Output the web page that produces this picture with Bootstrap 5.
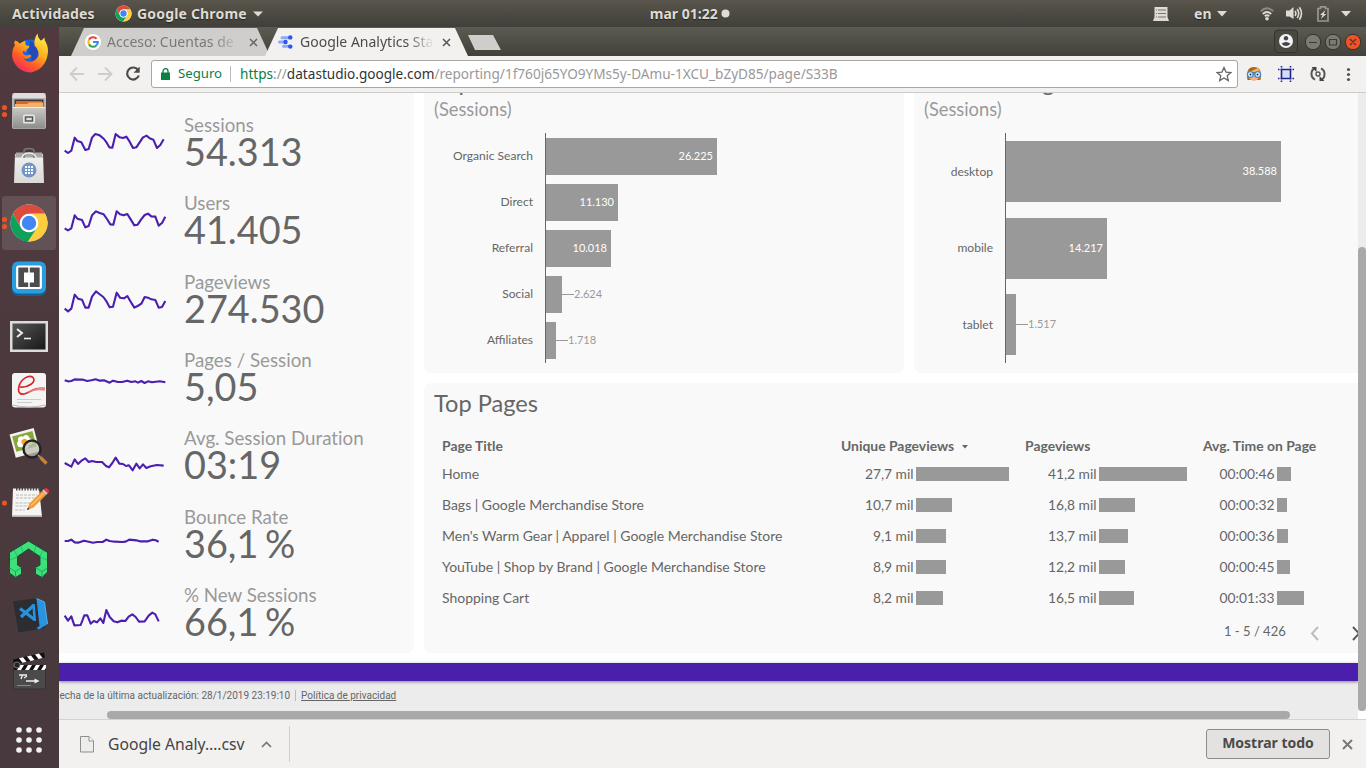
<!DOCTYPE html>
<html lang="es">
<head>
<meta charset="utf-8">
<meta name="viewport" content="width=device-width, initial-scale=1">
<title>Google Analytics Standard Dashboard</title>
<link href="https://cdn.jsdelivr.net/npm/bootstrap@5.3.0/dist/css/bootstrap.min.css" rel="stylesheet">
<style>
body{height:768px;width:1366px;font-family:"Noto Sans","Open Sans",sans-serif;background:#fff}
svg{display:block;flex:none}
.topbar{height:27px;background:linear-gradient(#59554c,#403f39);color:#dfdbd2;font-size:14px;font-weight:700;text-shadow:0 1px 1px #222;letter-spacing:.18px}
.dock{width:59px;background:linear-gradient(#50393f,#47393d)}
.dock-item{height:56px}
.tabstrip{height:29px;background:linear-gradient(#5c5b51,#41413a);font-size:14px;line-height:28px}
.tab{height:28px;margin-top:1px;background:#d0cecc;color:#7b7977;clip-path:polygon(13px 0,calc(100% - 13px) 0,100% 100%,0 100%)}
.tab-on{background:#f2f1f0;color:#4e4c4b}
.tab-name{overflow:hidden;white-space:nowrap;-webkit-mask-image:linear-gradient(90deg,#000 80%,transparent)}
.tab1{width:199px;margin-left:12px;padding-left:14px}
.tab2{width:203px;margin-left:-5px;padding-left:13px}
.newtab{width:33px;height:15px;margin:8px 0 0 0;background:#d0cecc;clip-path:polygon(0 0,25px 0,100% 100%,7px 100%)}
.toolbar{height:37px;background:#f2f1f0;border-bottom:1px solid #cdccca}
.addr{width:1087px;height:28px;border:1px solid #a9a7a5;border-radius:3px;background:#fff;font-size:13.6px;color:#999;white-space:nowrap}
.ok{color:#0b8043}
.host{color:#333}
.view{height:626px;background:#fff;overflow:hidden}
.page{width:1299px;font-family:Lato,sans-serif;color:#666;overflow:hidden}
.panel{background:#f9f9f9;flex:none}
.kpis{width:355px;height:560px;padding-top:22px;border-radius:0 0 7px 0}
.kpi{height:78.33px}
.kpi-name{font-size:18.74px;line-height:18px;padding-top:1px;color:#999;font-variant-ligatures:none}
.kpi-num{font-size:37.8px;line-height:36px;word-spacing:-3px}
.spark{fill:none;stroke:#4a1fb0;stroke-width:6.3;stroke-linejoin:round}
.chart-box{height:280px;overflow:hidden;padding-left:10px}
.box-title{font-size:23.6px;line-height:28px;white-space:nowrap}
.chart-box .box-title{margin-top:-25px}
.box-sub{font-size:18.3px;line-height:22px;color:#999;margin-top:2px}
.rows{height:230px;margin-top:13px}
.bar-row{flex:1 1 0}
.cat{font-size:12.05px;padding:.4px 12px 0 0;text-align:right}
.plot{border-left:1px solid #666}
.bar{background:#999;color:#fff;font-size:11px;padding-right:4px}
.leader{width:12px;height:1px;background:#999}
.outval{color:#999;font-size:11px}
.channels{width:480px;border-radius:0 0 7px 7px}.channels .cat{width:111px}.channels .bar{height:37px}
.devices{width:444px;border-radius:0 0 0 7px}.devices .cat{width:81px}.devices .bar{height:61px}.devices .box-title{letter-spacing:.2px}
.pages{height:270px;padding:6px 0 0 10px;border-radius:7px 0 0 7px;overflow:hidden}
.grid-table{table-layout:fixed;width:916px;margin:16px 0 0 8px;font-size:13.98px;line-height:20px}
.grid-table th,.grid-table td{padding:0;height:31px;color:#666;white-space:nowrap}
.grid-table th{height:25px;font-size:13.9px}
.numval{width:73px;text-align:right;font-size:13.8px;padding-right:.5px}
.numval-b{width:72px}
.hbar{height:14px;background:#999;margin-left:2px}
.pager{font-size:13px;line-height:20px;padding-left:790px;margin-top:8px;white-space:nowrap}
.stripe{height:18px;background:#4a1fac;box-shadow:0 1px 3px rgba(0,0,0,.45);position:relative}
.foot{height:30px;background:#ececec;font:10px/29px Roboto,sans-serif;color:#666;overflow:hidden;white-space:nowrap}
.foot>span:first-child{margin-left:-5px}
.htrack{height:8px;background:#ececec}
.hthumb{width:1183px;margin-left:48px;background:#a9a9a9;border-radius:4px}
.vtrack{width:8px;height:618px;background:#ececec;padding-top:154px}
.vthumb{height:464px;background:#a9a9a9;border-radius:4px}
.shelf{height:49px;background:#f2f1f0;border-top:1px solid #d3d2d0;color:#444}
.fname{font-size:15.7px;width:138px;white-space:nowrap;padding-top:2px}
.showall{width:124px;height:30px;border:1px solid #8c8b8a;border-radius:3px;background:#e3e2e0;color:#4b4a49;font-size:14px;font-weight:700;padding:0 0 3px;line-height:22px}
</style>
<script src="https://cdn.jsdelivr.net/npm/bootstrap@5.3.0/dist/js/bootstrap.bundle.min.js"></script>
</head>
<body class="d-flex flex-column overflow-hidden">
<svg width="0" height="0" class="position-absolute">
 <defs>
  <linearGradient id="ffBody" x1=".8" y1="0" x2=".2" y2="1"><stop offset="0" stop-color="#fff04a"/><stop offset=".4" stop-color="#ffb01f"/><stop offset=".7" stop-color="#ff5a26"/><stop offset="1" stop-color="#f0246e"/></linearGradient>
  <linearGradient id="drawer" x1="0" y1="0" x2="0" y2="1"><stop offset="0" stop-color="#c9c9c7"/><stop offset="1" stop-color="#8d8d8b"/></linearGradient>
  <linearGradient id="sheet" x1="0" y1="0" x2="0" y2="1"><stop offset="0" stop-color="#f2f2f0"/><stop offset="1" stop-color="#d9d9d6"/></linearGradient>
  <linearGradient id="term" x1="0" y1="0" x2="1" y2="1"><stop offset="0" stop-color="#555"/><stop offset="1" stop-color="#181818"/></linearGradient>
  <symbol id="chrome" viewBox="-20 -20 40 40"><circle r="19" fill="#fff"/><path d="M-16.45-9.5A19 19 0 0 1 16.45-9.5L0-9.5A9.5 9.5 0 0 0-8.2 4.75Z" fill="#dd4b3e"/><path d="M16.45-9.5A19 19 0 0 1-1 19L8.2 4.75A9.5 9.5 0 0 0 0-9.5Z" fill="#ffcd40"/><path d="M-1 19A19 19 0 0 1-16.45-9.5L-8.2 4.75A9.5 9.5 0 0 0 8.2 4.75Z" fill="#10a05c"/><circle r="9.2" fill="#fff"/><circle r="7.4" fill="#4285f4"/></symbol>
 </defs>
</svg>

<header class="topbar d-flex align-items-center position-relative">
 <span style="padding-left:12px;width:115px">Actividades</span>
 <svg width="17" height="17"><use href="#chrome" width="17" height="17"/></svg>
 <span style="padding-left:5px">Google Chrome</span>
 <svg style="margin-left:6px" width="10" height="6"><path d="M0 .5h10l-5 5z" fill="#dfdbd2"/></svg>
 <span style="margin-left:387px;letter-spacing:0">mar 01:22</span>
 <svg style="margin-left:3px" width="9" height="9"><circle cx="4.5" cy="4.5" r="4" fill="#dfdbd2"/></svg>
 <div class="ms-auto d-flex align-items-center">
  <svg width="16" height="14"><path d="M1.500 0h13v10l1.500 4H0l1.500-4z" fill="#dfdbd2"/><path d="M3 3h1M5 3h8M3 6.500h1M5 6.500h8M3 10h1M5 10h8" stroke="#77746b" stroke-width="1.100"/></svg>
  <span style="margin-left:25px;width:23px">en</span>
  <svg width="10" height="6"><path d="M0 0h10l-5 5.5z" fill="#dfdbd2"/></svg>
  <svg style="margin-left:33px" width="14" height="14" fill="none" stroke-width="1.9"><path d="M.8 4.2Q7-1.6 13.2 4.2" stroke="#8d8a82"/><path d="M2.8 7Q7 3 11.2 7" stroke="#dfdbd2"/><path d="M4.8 9.300Q7 7.400 9.200 9.300" stroke="#dfdbd2"/><circle cx="7" cy="11.800" r="1.800" fill="#dfdbd2"/></svg>
  <svg style="margin-left:12px" width="17" height="15" fill="none" stroke="#dfdbd2" stroke-width="1.600"><path d="M0 4.500h3.500L7.500 1v12L3.500 10.500H0z" fill="#dfdbd2" stroke="none"/><path d="M9 5q1.800 2.500 0 5M11.200 3q3 4.500 0 9M13.400 1.200q4.200 6.200 0 12.600"/></svg>
  <svg style="margin-left:14px" width="12" height="16"><path d="M1 2.500h2.500v-1.700h5v1.700h2.500v12.500h-10z" fill="none" stroke="#9a978f" stroke-width="1.700"/><path d="M8.500 4L3 9h2.500L3.800 13 9.300 8H6.700z" fill="#dfdbd2"/></svg>
  <svg style="margin:0 15px 0 12px" width="10" height="6"><path d="M0 0h10l-5 5.500z" fill="#dfdbd2"/></svg>
 </div>
</header>

<div class="d-flex flex-grow-1">
<nav class="dock d-flex flex-column">
 <svg class="dock-item" width="59" height="56"><circle cx="30" cy="26" r="13.500" fill="#1668d8"/><path d="M30 14c5 2 8 6 8 12s-5 9-8 9c3-3 2-7-2-9z" fill="#2448b8"/><path d="M15 13.500q3 .5 4.500 3l6-3q-1 3 .5 5l3.500.5q0 2-2.500 3.200-1.500 1.500-.5 2.800l-3.500-1q-1 2 1 3.500 3 2 6 0l1.500 1.500q-3 4-8 2.500 4 5 10 2.500 6-3 5-9-1-4-4-6.500-1-6.500 3-12 0 4 3 7 2-.5 4-3-.5 2.500 1.500 5 3 6 1.500 13-3 14-16.500 17-14-.5-18.500-14-1.500-8 2.500-13.500Q13.500 15.500 15 13.500z" fill="url(#ffBody)"/></svg>
 <svg class="dock-item" width="59" height="56"><rect x="12" y="10" width="34" height="36" rx="2" fill="#b5b5b3"/><path d="M14 10h30l2 5H12z" fill="#dededc"/><rect x="14.500" y="16.500" width="29" height="9" fill="#403632"/><path d="M16 18h26v7H16z" fill="#d9642c"/><path d="M15 21h12l2-1.500h14V25H15z" fill="#f3b06c"/><rect x="13" y="24" width="32" height="21.500" rx="1" fill="url(#drawer)"/><path d="M13 24.500h32" stroke="#eee"/><rect x="23" y="31.500" width="12" height="9" rx="1.500" fill="#e5e5e3"/><rect x="25.500" y="34" width="7" height="4" fill="#ddd" stroke="#555" stroke-width="1.500"/><circle cx="4.500" cy="24.500" r="2.600" fill="#e95420"/><circle cx="4.500" cy="31.500" r="2.600" fill="#e95420"/></svg>
 <svg class="dock-item" width="59" height="56"><path d="M15 15h28l1 29H14z" fill="url(#sheet)"/><path d="M16 13.500h26l1 5H15z" fill="#a9a9a6"/><path d="M24 19v-7q0-2.500 5-2.500t5 2.500v7" fill="none" stroke="#777" stroke-width="1.600"/><path d="M22 20q0-6 7-6t7 6" fill="none" stroke="#eee" stroke-width="1.600"/><circle cx="29" cy="31" r="7.500" fill="#7396c8"/><g fill="#fff"><path d="M25 27h2v2h-2zm3 0h2v2h-2zm3 0h2v2h-2zM25 30h2v2h-2zm3 0h2v2h-2zm3 0h2v2h-2zM25 33h2v2h-2zm3 0h2v2h-2zm3 0h2v2h-2z"/></g></svg>
 <svg class="dock-item" width="59" height="56"><rect x="2" y="1" width="54" height="54" rx="3" fill="#fff" opacity=".12"/><use href="#chrome" x="9.500" y="8.500" width="39" height="39"/><circle cx="4.500" cy="24.500" r="2.600" fill="#e95420"/><circle cx="4.500" cy="31.500" r="2.600" fill="#e95420"/></svg>
 <svg class="dock-item" width="59" height="56"><rect x="12" y="11.500" width="34" height="33.500" rx="6" fill="#15608f"/><rect x="12" y="10.500" width="34" height="32" rx="6" fill="#2a9de0"/><rect x="17.200" y="15.500" width="23.600" height="21.500" rx="1.500" fill="#4c4c4c" stroke="#fff" stroke-width="2.200"/><path d="M20.500 18.500h6.500v3h-3v10h3v3h-6.500zM37.500 18.500H31v3h3v10h-3v3h6.500z" fill="#4c4c4c"/><path d="M24 21.500h10v10H24z" fill="#fff"/><path d="M29 16v21" stroke="#fff" stroke-width="1.600"/></svg>
 <svg class="dock-item" width="59" height="56"><rect x="10" y="14" width="38" height="31" fill="#dcdcda"/><rect x="12.500" y="16.500" width="33" height="26" fill="url(#term)"/><path d="M17 22l5 4-5 4" fill="none" stroke="#eee" stroke-width="1.900"/><path d="M24 31.500h7" stroke="#eee" stroke-width="1.600"/></svg>
 <svg class="dock-item" width="59" height="56"><rect x="12" y="10" width="34" height="34.500" rx="3" fill="#f4f4f4"/><path d="M12.500 42q16 4 33 0" stroke="#bbb" fill="none"/><path d="M20 24C28 25 37 19 33 14.500c-4-3-12 1-14 9s3 9 9 6 9-5 17-4" fill="none" stroke="#d8262c" stroke-width="1.700"/><path d="M27 30q8-6 18-5.500l-.5 3.500q-8-2-17.500 2z" fill="#e98a8a"/><path d="M17 36.500h24M17 39.500h15" stroke="#ccc"/></svg>
 <svg class="dock-item" width="59" height="56"><g transform="rotate(-15 24 23)"><rect x="12" y="12" width="25" height="24" fill="#f3f3ef"/><rect x="14" y="14.500" width="21" height="16" fill="#8aa83a"/><g fill="#fff"><circle cx="22" cy="20" r="3.300"/><circle cx="27" cy="20" r="3.300"/><circle cx="20" cy="24" r="3.300"/><circle cx="29" cy="24" r="3.300"/><circle cx="24.500" cy="27" r="3.300"/></g><circle cx="24.500" cy="23" r="3" fill="#f5a51c"/></g><circle cx="32" cy="30" r="8.500" fill="#bcbdb2" fill-opacity=".75" stroke="#222" stroke-width="2.400"/><path d="M38 36l3 3" stroke="#888" stroke-width="2"/><path d="M40.500 38.500l6 6" stroke="#c98432" stroke-width="3.200"/></svg>
 <svg class="dock-item" width="59" height="56"><path d="M13 13.500h26l3 28H12z" fill="#f5f5f3"/><path d="M12 41h30" stroke="#bbb" stroke-width="1.500"/><path d="M16 13.500h24" stroke="#444" stroke-width="4" stroke-dasharray="1.400 1.400"/><path d="M16 20h21M16 23h19M15.500 28h20M15.500 31h13M15 35h10" stroke="#bbb" stroke-dasharray="3 1"/><path d="M27 35l2.500-6.500L42 16l4 4-12.500 12.500z" fill="#f39a35"/><path d="M31 30.500L44 18" stroke="#ffc46b" stroke-width="1.300"/><path d="M42 16l2-2 4 4-2 2z" fill="#ccc"/><path d="M44 14.500q2.500-2 4 0t0 3.500z" fill="#e2383f" stroke="#e2383f"/><path d="M27 35l1-2.500 1.500 1.500z" fill="#222"/><circle cx="4.500" cy="28" r="2.600" fill="#e95420"/></svg>
 <svg class="dock-item" width="59" height="56"><g stroke="#154f31" stroke-linejoin="round"><path d="M9.500 21.500L28.500 10l19 11.500V41L42 46.500 35.500 43v-6.500L40 34V25.500L28.500 18 17.500 25.500V34l4 2.500V43L15.500 46.500 9.500 42z" fill="#3ee07c"/><path d="M9.500 37l6 3.500 6-4M15.500 40.500v6M35.500 36.500l6.500 4 5.500-3.500M42 40.500v6" fill="none" stroke="#1b9a50" stroke-width=".8"/><path d="M10 29l7-3M14 19l3.500 6.500M21 15l2 6.500M36 15l-2 6.500M43 19l-3 6.500M47 29l-7-3" fill="none" stroke="#1fae5c" stroke-width=".7"/></g></svg>
 <svg class="dock-item" width="59" height="56"><path d="M13 14.500L37 11 45 41 18.500 45.500z" fill="#2b2d33"/><path d="M36.500 11.500l8 3.500L47.500 37l-8.500 5.500L36.500 41l3-2z" fill="#2a94e0"/><path d="M36.500 11.500l8 3.500L47.500 37" fill="none" stroke="#53b1ee"/><path d="M20 21.500L34.500 32.500M33.500 18.500L21 30" stroke="#2792dc" stroke-width="3.200"/><path d="M33.500 17l1.300 17" stroke="#2792dc" stroke-width="2.600"/></svg>
 <svg class="dock-item" width="59" height="56"><rect x="13.500" y="23" width="32" height="23" fill="#4a4a4a" stroke="#333"/><path d="M13 16.500L44 9.500l1 5L14 21.500z" fill="#111"/><path d="M19 15.200l4-1 3.500 4.500-4 1zM27 13.400l4-1 3.500 4.500-4 1zM35 11.600l4-1 3.500 4.500-4 1z" fill="#fff"/><rect x="14" y="22" width="32" height="5" fill="#111"/><path d="M20 22h4l-3 5h-4zM28 22h4l-3 5h-4zM36 22h4l-3 5h-4zM44 22h2v3l-1.500 2H41z" fill="#fff"/><circle cx="17" cy="22" r="3" fill="#222" stroke="#777"/><path d="M19 32h8M22.500 32l-1.500 4M24 35l3-2M26 38h10" stroke="#eee" fill="none" stroke-width="1.400"/><path d="M34.500 35.500l5 2.500-5 2.500z" fill="#eee"/><path d="M17 42.500h14" stroke="#888"/></svg>
 <svg width="59" height="69" fill="#f2f2f2"><g><circle cx="19" cy="31" r="2.800"/><circle cx="29" cy="31" r="2.800"/><circle cx="39" cy="31" r="2.800"/><circle cx="19" cy="41" r="2.800"/><circle cx="29" cy="41" r="2.800"/><circle cx="39" cy="41" r="2.800"/><circle cx="19" cy="51" r="2.800"/><circle cx="29" cy="51" r="2.800"/><circle cx="39" cy="51" r="2.800"/></g></svg>
</nav>

<main class="d-flex flex-column flex-grow-1">
 <div class="tabstrip d-flex">
  <div class="tab tab1 d-flex align-items-center">
   <svg width="16" height="16" viewBox="0 0 16 16" fill="none" stroke-width="2.100"><circle cx="8" cy="8" r="8" fill="#fff"/><path d="M11.600 4.800A4.800 4.800 0 0 0 4 5.600" stroke="#ea4335"/><path d="M4 5.600a4.800 4.800 0 0 0 0 4.800" stroke="#fbbc05"/><path d="M4 10.400a4.800 4.800 0 0 0 7.400 1" stroke="#34a853"/><path d="M11.300 11.500A4.800 4.800 0 0 0 12.800 8H8" stroke="#4285f4"/></svg>
   <span class="tab-name" style="width:133px;margin-left:6px">Acceso: Cuentas de</span>
   <svg style="margin-left:9px" width="9" height="9"><path d="M1 1l7 7M8 1l-7 7" stroke="#666" stroke-width="1.500"/></svg>
  </div>
  <div class="tab tab-on tab2 d-flex align-items-center">
   <svg width="16" height="14"><path d="M4 2.800h8M1.500 7h6M5.500 11.200h7" stroke="#8fa8f8" stroke-width="3" stroke-linecap="round"/><circle cx="12.300" cy="2.400" r="2.200" fill="#2a56f0"/><circle cx="7.500" cy="7" r="2.200" fill="#2a56f0"/><circle cx="12.300" cy="11.600" r="2.200" fill="#2a56f0"/></svg>
   <span class="tab-name" style="width:134px;margin-left:6px">Google Analytics Sta</span>
   <svg style="margin-left:8px" width="9" height="9"><path d="M1 1l7 7M8 1l-7 7" stroke="#555" stroke-width="1.500"/></svg>
  </div>
  <div class="newtab"></div>
  <svg class="ms-auto" width="94" height="29"><rect x="2.500" y="3" width="23" height="22.500" rx="3.500" fill="#494841" stroke="#34332e"/><circle cx="14" cy="14" r="7" fill="#f4f4f4"/><circle cx="14" cy="11.300" r="2.200" fill="#444"/><path d="M9.500 16.800q4.500-3.800 9 0-4.500 4.500-9 0z" fill="#444"/><g stroke="#33322d"><circle cx="41" cy="15" r="7.700" fill="#7c7a71"/><circle cx="61" cy="15" r="7.700" fill="#7c7a71"/><circle cx="81" cy="15" r="7.700" fill="#f2512a"/></g><path d="M37 15.500h8M57.500 12.500h7v5.500h-7zM78 12l6 6M84 12l-6 6" fill="none" stroke="#3b3a34" stroke-width="1.200"/></svg>
 </div>
 <div class="toolbar d-flex align-items-center">
  <svg width="92" height="36" fill="none" stroke-width="1.900"><path d="M25 18H12M18 11.500L11.500 18l6.500 6.500M39 18h13M46 11.500l6.500 6.500-6.500 6.500" stroke="#cfcdcb"/><path d="M79 14a6 6 0 1 0 .8 5.500" stroke="#4a4a4a" stroke-width="2.200"/><path d="M80.700 10.500v6.200h-6.200z" fill="#4a4a4a"/></svg>
  <div class="addr d-flex align-items-center">
   <svg style="margin-left:9px" width="9" height="12"><path d="M0 4.500h9V12H0z" fill="#0b8043"/><path d="M2 5V3.200a2.500 2.500 0 0 1 5 0V5" fill="none" stroke="#0b8043" stroke-width="1.300"/></svg>
   <span class="ok" style="margin-left:8px;width:52px;font-size:13.2px">Seguro</span>
   <span style="width:1px;height:16px;background:#bbb;margin-right:9px"></span>
   <span><span class="ok">https</span>://<span class="host">datastudio.google.com</span>/reporting/1f760j65YO9YMs5y-DAmu-1XCU_bZyD85/page/S33B</span>
   <svg class="ms-auto" style="margin-right:5px" width="16" height="16"><path d="M8 1.500l2 4.600 4.900.4-3.700 3.300 1.100 4.800L8 12l-4.300 2.600 1.100-4.800L1.100 6.500 6 6.100z" fill="none" stroke="#666" stroke-width="1.300"/></svg>
  </div>
  <svg style="margin-left:8px" width="16" height="16"><path d="M1.500 14Q-1 1 8 1t6.500 13z" fill="#a86b14"/><path d="M3 9h10v3q-5 6-10 0z" fill="#f4b183"/><path d="M3 6q5-2 9-4l2 4z" fill="#f2b27c"/><circle cx="4.300" cy="8.500" r="2.900" fill="#e8f4ff" stroke="#3f8ad0" stroke-width="1.300"/><circle cx="11.700" cy="8.500" r="2.900" fill="#e8f4ff" stroke="#3f8ad0" stroke-width="1.300"/><circle cx="4.500" cy="8.500" r="1" fill="#135"/><circle cx="11.500" cy="8.500" r="1" fill="#135"/></svg>
  <svg style="margin-left:16px" width="16" height="16"><path d="M4 4h8v8H4z" fill="#d5ddf2"/><path d="M0 3.500h1.500M2.500 3.500h11M14.500 3.500H16M0 12.500h1.500M2.500 12.500h11M14.500 12.500H16M3.500 0v1.500M3.500 2.500v11M3.500 14.500V16M12.500 0v1.500M12.500 2.500v11M12.500 14.500V16" stroke="#1d2590" stroke-width="1.600"/></svg>
  <svg style="margin-left:16px" width="16" height="16" fill="none" stroke="#555" stroke-width="2"><path d="M5.500 1.800A6.500 6.500 0 0 0 5 13.600M10.500 14.200A6.500 6.500 0 0 0 11 2.400"/><path d="M1.500 1h5v5zM14.500 15h-5v-5z" fill="#444" stroke="none"/><circle cx="8" cy="8" r="2" stroke-width="1.400"/></svg>
  <svg style="margin-left:20px" width="5" height="15" fill="#555"><circle cx="2.500" cy="2.500" r="1.600"/><circle cx="2.500" cy="7.500" r="1.600"/><circle cx="2.500" cy="12.500" r="1.600"/></svg>
 </div>

 <div class="view d-flex">
  <div class="page d-flex flex-column">
   <div class="d-flex">
    <section class="panel kpis">
     <div class="kpi d-flex"><svg width="125" height="60" viewBox="3 60 375 180"><polyline class="spark" points="20,167 30,174 40,167 50,128 58,138 70,142 82,165 92,162 102,128 112,117 125,121 138,132 146,143 154,157 163,158 173,117 185,127 195,129 205,125 215,140 225,159 235,157 245,142 255,127 266,122 275,130 286,134 297,159 307,150 317,133"/></svg><div><div class="kpi-name">Sessions</div><div class="kpi-num">54.313</div></div></div>
     <div class="kpi d-flex"><svg width="125" height="60" viewBox="3 295 375 180"><polyline class="spark" points="20,401 30,407 40,401 50,362 58,372 72,376 82,398 92,394 102,362 114,350 125,355 137,359 147,373 157,389 166,390 176,350 186,359 197,362 208,358 218,374 229,392 239,390 249,375 260,361 270,357 280,365 292,366 302,393 312,385 322,366"/></svg><div><div class="kpi-name">Users</div><div class="kpi-num">41.405</div></div></div>
     <div class="kpi d-flex"><svg width="125" height="60" viewBox="3 530 375 180"><polyline class="spark" points="20,640 30,648 40,640 50,598 60,610 72,613 82,637 92,637 102,604 114,588 124,596 136,605 146,619 155,636 165,634 176,592 186,607 198,609 208,602 218,619 229,637 239,632 250,625 260,605 270,607 280,612 292,614 302,637 312,635 322,617"/></svg><div><div class="kpi-name">Pageviews</div><div class="kpi-num">274.530</div></div></div>
     <div class="kpi d-flex"><svg width="125" height="60" viewBox="3 765 375 180"><polyline class="spark" points="20,856 30,859 40,858 50,853 62,854 75,854 88,858 100,856 113,853 125,857 138,856 155,863 165,857 180,861 192,861 208,857 220,861 232,859 240,863 250,858 260,864 270,859 282,862 305,859 322,862"/></svg><div><div class="kpi-name">Pages / Session</div><div class="kpi-num">5,05</div></div></div>
     <div class="kpi d-flex"><svg width="125" height="60" viewBox="3 145 375 180"><polyline class="spark" points="20,250 40,261 50,239 60,253 72,242 82,236 92,247 102,244 115,247 132,247 144,259 153,263 163,250 173,234 184,252 195,253 204,259 213,257 224,272 235,252 245,266 255,254 265,265 278,260 297,256 317,258"/></svg><div><div class="kpi-name">Avg. Session Duration</div><div class="kpi-num">03:19</div></div></div>
     <div class="kpi d-flex"><svg width="125" height="60" viewBox="3 380 375 180"><polyline class="spark" points="20,482 30,482 40,478 50,486 60,487 78,481 92,484 105,487 118,485 134,485 145,478 155,482 170,484 192,485 203,484 214,478 235,480 245,483 270,483 284,478 293,480 302,484"/></svg><div><div class="kpi-name">Bounce Rate</div><div class="kpi-num">36,1 %</div></div></div>
     <div class="kpi d-flex"><svg width="125" height="60" viewBox="3 615 375 180"><polyline class="spark" points="20,707 30,722 40,709 49,736 68,735 79,706 88,706 98,731 107,723 117,727 127,715 136,729 145,690 155,711 167,724 178,727 190,722 202,723 212,710 223,703 233,711 243,725 260,724 272,707 283,698 292,703 302,724"/></svg><div><div class="kpi-name">% New Sessions</div><div class="kpi-num">66,1 %</div></div></div>
    </section>
    <div class="d-flex flex-column" style="margin-left:10px">
     <div class="d-flex">
      <section class="panel chart-box channels">
       <div class="box-title">Top Channels</div><div class="box-sub">(Sessions)</div>
       <div class="rows d-flex flex-column">
        <div class="bar-row d-flex"><div class="cat my-auto">Organic Search</div><div class="plot d-flex align-items-center"><div class="bar d-flex align-items-center justify-content-end" style="width:171px">26.225</div></div></div>
        <div class="bar-row d-flex"><div class="cat my-auto">Direct</div><div class="plot d-flex align-items-center"><div class="bar d-flex align-items-center justify-content-end" style="width:72px">11.130</div></div></div>
        <div class="bar-row d-flex"><div class="cat my-auto">Referral</div><div class="plot d-flex align-items-center"><div class="bar d-flex align-items-center justify-content-end" style="width:65px">10.018</div></div></div>
        <div class="bar-row d-flex"><div class="cat my-auto">Social</div><div class="plot d-flex align-items-center"><div class="bar" style="width:16px"></div><div class="leader"></div><div class="outval">2.624</div></div></div>
        <div class="bar-row d-flex"><div class="cat my-auto">Affiliates</div><div class="plot d-flex align-items-center"><div class="bar" style="width:10px"></div><div class="leader"></div><div class="outval">1.718</div></div></div>
       </div>
      </section>
      <section class="panel chart-box devices" style="margin-left:10px">
       <div class="box-title">Device Usage</div><div class="box-sub">(Sessions)</div>
       <div class="rows d-flex flex-column">
        <div class="bar-row d-flex"><div class="cat my-auto">desktop</div><div class="plot d-flex align-items-center"><div class="bar d-flex align-items-center justify-content-end" style="width:275px">38.588</div></div></div>
        <div class="bar-row d-flex"><div class="cat my-auto">mobile</div><div class="plot d-flex align-items-center"><div class="bar d-flex align-items-center justify-content-end" style="width:101px">14.217</div></div></div>
        <div class="bar-row d-flex"><div class="cat my-auto">tablet</div><div class="plot d-flex align-items-center"><div class="bar" style="width:10px"></div><div class="leader"></div><div class="outval">1.517</div></div></div>
       </div>
      </section>
     </div>
     <section class="panel pages" style="margin-top:10px">
      <div class="box-title">Top Pages</div>
      <table class="table-borderless grid-table">
       <colgroup><col style="width:399px"><col style="width:184px"><col style="width:178px"><col></colgroup>
       <thead><tr><th>Page Title</th><th>Unique Pageviews <svg class="d-inline-block align-middle ms-1" width="6" height="4"><path d="M0 0h6L3 3.500z" fill="#666"/></svg></th><th>Pageviews</th><th>Avg. Time on Page</th></tr></thead>
       <tbody>
        <tr><td>Home</td><td><div class="d-flex align-items-center"><div class="numval">27,7 mil</div><div class="hbar" style="width:93px"></div></div></td><td><div class="d-flex align-items-center"><div class="numval numval-b">41,2 mil</div><div class="hbar" style="width:88px"></div></div></td><td><div class="d-flex align-items-center"><div class="numval numval-b">00:00:46</div><div class="hbar" style="width:14px"></div></div></td></tr>
        <tr><td>Bags | Google Merchandise Store</td><td><div class="d-flex align-items-center"><div class="numval">10,7 mil</div><div class="hbar" style="width:36px"></div></div></td><td><div class="d-flex align-items-center"><div class="numval numval-b">16,8 mil</div><div class="hbar" style="width:36px"></div></div></td><td><div class="d-flex align-items-center"><div class="numval numval-b">00:00:32</div><div class="hbar" style="width:10px"></div></div></td></tr>
        <tr><td>Men's Warm Gear | Apparel | Google Merchandise Store</td><td><div class="d-flex align-items-center"><div class="numval">9,1 mil</div><div class="hbar" style="width:30px"></div></div></td><td><div class="d-flex align-items-center"><div class="numval numval-b">13,7 mil</div><div class="hbar" style="width:29px"></div></div></td><td><div class="d-flex align-items-center"><div class="numval numval-b">00:00:36</div><div class="hbar" style="width:11px"></div></div></td></tr>
        <tr><td>YouTube | Shop by Brand | Google Merchandise Store</td><td><div class="d-flex align-items-center"><div class="numval">8,9 mil</div><div class="hbar" style="width:30px"></div></div></td><td><div class="d-flex align-items-center"><div class="numval numval-b">12,2 mil</div><div class="hbar" style="width:26px"></div></div></td><td><div class="d-flex align-items-center"><div class="numval numval-b">00:00:45</div><div class="hbar" style="width:13px"></div></div></td></tr>
        <tr><td>Shopping Cart</td><td><div class="d-flex align-items-center"><div class="numval">8,2 mil</div><div class="hbar" style="width:27px"></div></div></td><td><div class="d-flex align-items-center"><div class="numval numval-b">16,5 mil</div><div class="hbar" style="width:35px"></div></div></td><td><div class="d-flex align-items-center"><div class="numval numval-b">00:01:33</div><div class="hbar" style="width:27px"></div></div></td></tr>
       </tbody>
      </table>
      <div class="pager d-flex align-items-center"><span>1 - 5 / 426</span><svg style="margin:4px 0 0 24px" width="56" height="15" fill="none" stroke-width="1.900"><path d="M8 1L2 7.500 8 14" stroke="#bbb"/><path d="M43 1l6 6.500-6 6.500" stroke="#555"/></svg></div>
     </section>
    </div>
   </div>
   <div class="stripe" style="margin-top:10px"></div>
   <div class="foot d-flex"><span>Fecha de la última actualización: 28/1/2019 23:19:10</span><span style="width:1px;height:11px;background:#bbb;margin:9px 5px 0"></span><span class="text-decoration-underline">Política de privacidad</span></div>
   <div class="htrack d-flex"><div class="hthumb"></div></div>
  </div>
  <div class="vtrack"><div class="vthumb"></div></div>
 </div>

 <footer class="shelf d-flex align-items-center">
  <svg style="margin-left:21px" width="14" height="17"><path d="M.5.5h8.500l4.500 4.500v11H.5z" fill="#ededeb" stroke="#8f8f8b"/><path d="M9 .5V5h4.500" fill="#fff" stroke="#8f8f8b"/></svg>
  <span class="fname" style="margin-left:14px">Google Analy….csv</span>
  <svg style="margin-left:15px" width="11" height="7"><path d="M1 6l4.500-4.500L10 6" fill="none" stroke="#777" stroke-width="1.700"/></svg>
  <span style="width:1px;height:36px;background:#cfcecc;margin-left:17px"></span>
  <button class="btn showall ms-auto">Mostrar todo</button>
  <svg style="margin:0 13px 0 12px" width="11" height="11"><path d="M1 1l9 9M10 1l-9 9" stroke="#777" stroke-width="1.900"/></svg>
 </footer>
</main>
</div>
</body>
</html>
